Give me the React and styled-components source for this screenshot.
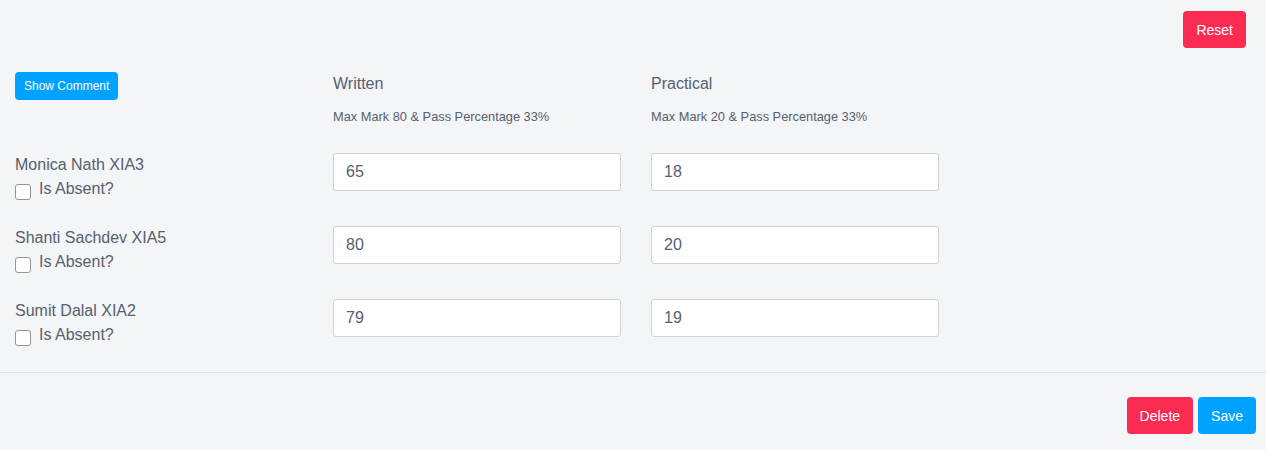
import React from "react";
import styled, { createGlobalStyle } from "styled-components";

const GlobalStyle = createGlobalStyle`
  body {
    margin: 0;
    background: #f4f5f7;
    font-family: "Liberation Sans", Arial, sans-serif;
    color: #56606e;
  }
`;

const Page = styled.div`
  width: 1266px;
  height: 450px;
  background: #f4f5f7;
`;

const TopBar = styled.div`
  display: flex;
  justify-content: flex-end;
  padding: 11px 20px 0 0;
  height: 36px;
`;

const Button = styled.button`
  border: none;
  border-radius: 4px;
  color: #fff;
  font-family: "Liberation Sans", Arial, sans-serif;
  font-size: ${(p) => (p.small ? "12px" : "14px")};
  height: ${(p) => (p.small ? "28px" : "37px")};
  padding: ${(p) => (p.small ? "0 9px" : "0 13px")};
  background: ${(p) => (p.variant === "danger" ? "#fb2b52" : "#00a2ff")};
  cursor: pointer;
`;

const Grid = styled.div`
  display: grid;
  grid-template-columns: 288px 288px 288px;
  column-gap: 30px;
  padding: 25px 15px 0;
`;

const HeaderCell = styled.div`
  height: 81px;
`;

const ColTitle = styled.div`
  font-size: 16px;
  margin-top: 2px;
  line-height: 20px;
`;

const ColSub = styled.div`
  font-size: 12.8px;
  margin-top: 16px;
  line-height: 14px;
`;

const Student = styled.div`
  height: 73px;
  padding-top: 3px;
  box-sizing: border-box;
`;

const Name = styled.div`
  font-size: 16px;
  line-height: 18px;
`;

const AbsentLabel = styled.label`
  display: flex;
  align-items: flex-start;
  gap: 8px;
  margin-top: 6px;
  font-size: 16px;
  line-height: 18px;
`;

const Box = styled.span`
  display: inline-block;
  width: 14px;
  height: 14px;
  margin-top: 4px;
  border: 1px solid #8f959d;
  border-radius: 3px;
  background: #fff;
`;

const MarkCell = styled.div`
  height: 73px;
`;

const MarkInput = styled.input`
  width: 100%;
  height: 38px;
  box-sizing: border-box;
  border: 1px solid #cfd3d8;
  border-radius: 3px;
  background: #fff;
  padding: 0 12px;
  font-family: "Liberation Sans", Arial, sans-serif;
  font-size: 16px;
  color: #56606e;
  outline: none;
`;

const Divider = styled.div`
  border-top: 1px solid #dfe1e4;
`;

const Footer = styled.div`
  display: flex;
  justify-content: flex-end;
  gap: 5px;
  padding: 24px 10px 0 0;
`;

const students = [
  { name: "Monica Nath XIA3", written: "65", practical: "18" },
  { name: "Shanti Sachdev XIA5", written: "80", practical: "20" },
  { name: "Sumit Dalal XIA2", written: "79", practical: "19" },
];

export default function App() {
  return (
    <Page>
      <GlobalStyle />
      <TopBar>
        <Button variant="danger">Reset</Button>
      </TopBar>
      <Grid>
        <HeaderCell>
          <Button small>Show Comment</Button>
        </HeaderCell>
        <HeaderCell>
          <ColTitle>Written</ColTitle>
          <ColSub>Max Mark 80 &amp; Pass Percentage 33%</ColSub>
        </HeaderCell>
        <HeaderCell>
          <ColTitle>Practical</ColTitle>
          <ColSub>Max Mark 20 &amp; Pass Percentage 33%</ColSub>
        </HeaderCell>
        {students.map((s) => (
          <React.Fragment key={s.name}>
            <Student>
              <Name>{s.name}</Name>
              <AbsentLabel>
                <Box />
                Is Absent?
              </AbsentLabel>
            </Student>
            <MarkCell>
              <MarkInput defaultValue={s.written} />
            </MarkCell>
            <MarkCell>
              <MarkInput defaultValue={s.practical} />
            </MarkCell>
          </React.Fragment>
        ))}
      </Grid>
      <Divider />
      <Footer>
        <Button variant="danger">Delete</Button>
        <Button>Save</Button>
      </Footer>
    </Page>
  );
}
